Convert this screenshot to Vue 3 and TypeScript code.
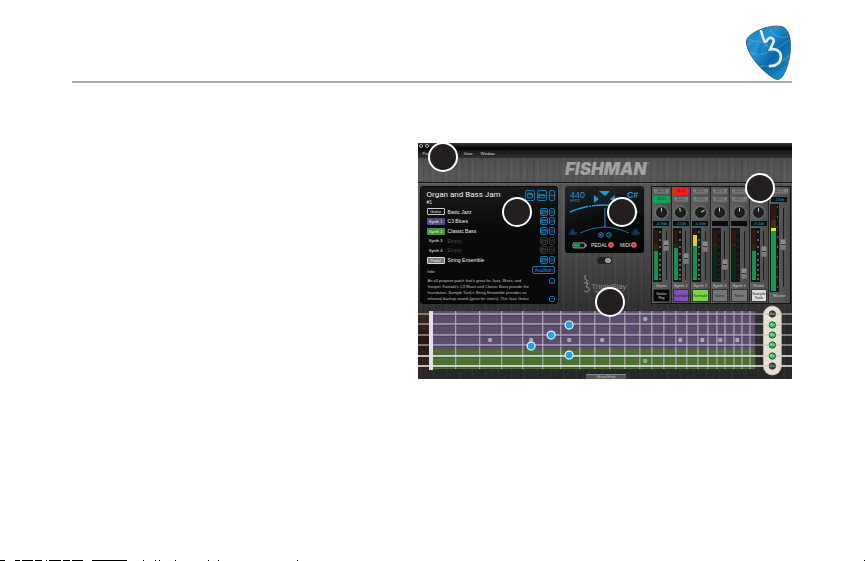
<script setup lang="ts">
import { ref } from 'vue'

interface Slot { label: string; name: string; kind: string }
interface Channel {
  name: string; device: string; tone: string; level: string
  mute: boolean; solo: boolean; green: number; yellow: number; dim: boolean; fader: number; knob: number
}

const slots: Slot[] = [
  { label: 'Guitar', name: 'Basic Jazz', kind: 'outline' },
  { label: 'Synth 1', name: 'C3 Blues', kind: 'purple' },
  { label: 'Synth 2', name: 'Classic Bass', kind: 'green' },
  { label: 'Synth 3', name: 'Empty', kind: 'empty' },
  { label: 'Synth 4', name: 'Empty', kind: 'empty' },
  { label: 'Pedal', name: 'String Ensemble', kind: 'silver' },
]

const channels = ref<Channel[]>([
  { name: 'Guitar', device: 'Guitar Rig', tone: 'black', level: '-4.9db', mute: false, solo: true, green: 29, yellow: 0, dim: false, fader: 73, knob: 0 },
  { name: 'Synth 1', device: 'Kontakt', tone: 'violet', level: '-12db', mute: true, solo: false, green: 32, yellow: 0, dim: false, fader: 43, knob: -10 },
  { name: 'Synth 2', device: 'Kontakt', tone: 'lime', level: '-0.4db', mute: false, solo: false, green: 34, yellow: 11, dim: false, fader: 69, knob: 60 },
  { name: 'Synth 3', device: 'None', tone: 'gray', level: '', mute: false, solo: false, green: 34, yellow: 0, dim: true, fader: 29, knob: 0 },
  { name: 'Synth 4', device: 'None', tone: 'gray', level: '', mute: false, solo: false, green: 34, yellow: 0, dim: true, fader: 8, knob: 0 },
  { name: 'Pedal', device: 'Sample Tank', tone: 'white', level: '-8.4db', mute: false, solo: false, green: 29, yellow: 0, dim: false, fader: 59, knob: 0 },
])
const master = ref(55)
const tunerOn = ref(true)

const frets = [37, 61, 83, 104, 124, 142, 161, 176, 191, 206, 221, 233, 245, 257, 268, 279, 289, 298, 306, 315, 323, 331]
const strings = [10, 20, 31, 41, 52, 62]
const inlays = [[72, 36], [113, 36], [151, 36], [184, 36], [227, 15], [227, 57], [262, 36], [284, 36], [302, 36], [319, 36]]
const notes = [[151, 21], [133, 31], [113, 42], [151, 51]]
const leds = [
  { y: 10, on: false }, { y: 21, on: true }, { y: 31, on: true },
  { y: 41, on: true }, { y: 52, on: true }, { y: 62, on: false },
]
const ticks = [4, 12, 19, 26, 32, 37, 42, 47, 51]
const callouts = ['on-menu', 'on-patch', 'on-tuner', 'on-mixer', 'on-board']
const marks = [[0, 5], [15, 5], [22, 11], [35, 7], [46, 1], [49, 12], [63, 7], [72, 11], [92, 35], [143, 1], [155, 1], [159, 1], [175, 1], [208, 1], [218, 1], [297, 1], [864, 1]]
</script>

<template>
  <div class="page">
    <header class="head">
      <svg class="pick" viewBox="45 30 140 168" aria-hidden="true">
        <defs>
          <linearGradient id="pickFill" x1="0" y1="0" x2="1" y2="1">
            <stop offset="0" stop-color="#187fc0" />
            <stop offset=".35" stop-color="#2493d2" />
            <stop offset=".6" stop-color="#0868ad" />
            <stop offset="1" stop-color="#24a0da" />
          </linearGradient>
          <clipPath id="pickClip"><path d="M49 77C51 66 66 54 89 44C114 33 146 31 158 36C174 43 181 63 181 95C181 134 165 180 151 190C145 195 137 194 126 187C94 165 61 128 52 98C49 89 48 83 49 77Z" /></clipPath>
        </defs>
        <path d="M49 77C51 66 66 54 89 44C114 33 146 31 158 36C174 43 181 63 181 95C181 134 165 180 151 190C145 195 137 194 126 187C94 165 61 128 52 98C49 89 48 83 49 77Z" fill="url(#pickFill)" stroke="#505f67" stroke-width="3" />
        <g clip-path="url(#pickClip)" fill="none" stroke-linecap="round">
          <path d="M52 91Q85 60 126 105M62 112Q112 132 176 75M91 154Q138 155 181 120M121 47Q144 76 175 63M52 75Q76 73 83 88" stroke="#70c4e9" stroke-width="4" opacity=".35" />
          <path d="M86 113Q93 75 121 78L115 116M115 116Q142 122 152 98M120 163Q145 170 163 145" stroke="#075b99" stroke-width="9" opacity=".32" />
        </g>
        <path d="M92 45C95 57 99 70 104 81C112 81 111 71 118 69C128 66 134 76 129 84L120 103C137 100 151 108 152 123C153 142 139 156 116 153" transform="translate(2 2)" fill="none" stroke="#365668" stroke-width="8" opacity=".65" />
        <path d="M92 45C95 57 99 70 104 81C112 81 111 71 118 69C128 66 134 76 129 84L120 103C137 100 151 108 152 123C153 142 139 156 116 153" fill="none" stroke="#e6e9eb" stroke-width="8" />
      </svg>
    </header>

    <main class="content">
      <section class="app">
        <div class="titlebar"><button aria-label="Close"></button><button aria-label="Minimize"></button></div>
        <nav class="menu"><a href="#">Patch</a><a href="#" class="view">View</a><a href="#">Window</a></nav>
        <div class="brand">FISHMAN<sup>®</sup></div>

        <div class="panels">
          <section class="patch">
            <div class="patch-head">
              <div>
                <h1>Organ and Bass Jam</h1>
                <p class="num">#1</p>
              </div>
              <div class="tools">
                <button class="tool big" aria-label="Save"><svg viewBox="0 0 10 10"><path d="M2 2h5l1 1v5H2zM4 2v2h3V2" /></svg></button>
                <button class="tool big" aria-label="Open"><svg viewBox="0 0 10 10"><path d="M1 8V3h2l1 1h4v1M1 8l1-3h7L8 8z" /></svg></button>
                <button class="tool tall" aria-label="Step"><svg viewBox="0 0 6 10"><path d="M0 5h6M2 3l1-1 1 1M2 7l1 1 1-1" /></svg></button>
              </div>
            </div>
            <ul class="slots">
              <li v-for="s in slots" :key="s.label" :class="s.kind">
                <span class="badge">{{ s.label }}</span>
                <span class="name">{{ s.name }}</span>
                <button class="tool small" :aria-label="'Open ' + s.label"><svg viewBox="0 0 8 7"><path d="M1 6V1h2l1 1h3v1M1 6l1-3h5L6 6z" /></svg></button>
                <button class="tool step" :aria-label="'Step ' + s.label"><svg viewBox="0 0 6 8"><path d="M0 4h6M2 2l1-1 1 1M2 6l1 1 1-1" /></svg></button>
              </li>
            </ul>
            <div class="info-head"><span>Info:</span><button class="audition">Audition</button></div>
            <div class="info">
              <p>An all-purpose patch that's great for Jazz, Blues, and<br>Gospel. Kontakt's C3 Blues and Classic Bass provide the<br>foundation. Sample Tank's String Ensemble provides an<br>ethereal backup sound (great for intro's). The Jazz Guitar</p>
              <div class="scroll">
                <button class="tool" aria-label="Scroll up"><svg viewBox="0 0 6 6"><path d="M2 4l1-1 1 1" /></svg></button>
                <button class="tool" aria-label="Scroll down"><svg viewBox="0 0 6 6"><path d="M2 2l1 1 1-1" /></svg></button>
              </div>
            </div>
          </section>

          <section class="center">
            <div class="tuner">
              <svg viewBox="0 0 79 67">
                <path d="M34 0H79V30Q55 20 30 20z" fill="#fff" opacity=".04" />
                <g fill="#159be0">
                  <text x="5" y="12" class="pitch">440</text>
                  <text x="5" y="16" class="micro">HERTZ</text>
                  <text x="62" y="12" class="lcd">C#</text>
                  <path d="M34 5h11l-5 5zM29 9l5 4-5 4zM50 9l-5 4 5 4z" />
                  <text x="5" y="46" class="micro">-20</text><text x="4" y="49" class="micro">CENT</text>
                  <text x="68" y="46" class="micro">+20</text><text x="67" y="49" class="micro">CENT</text>
                </g>
                <g fill="none" stroke="#159be0">
                  <path d="M5 26Q21 19 39 19T73 26" stroke-width="1.500" />
                  <path d="M40 22v20" />
                  <path d="M15 47Q40 35 64 47" stroke-width=".7" />
                  <circle cx="36" cy="49" r="2.300" stroke-width=".9" /><circle cx="44" cy="49" r="2.300" stroke-width=".9" />
                  <path d="M35 49h2M36 48v2M43 49h2" stroke-width=".8" />
                  <path d="M23 18l1 4M26 18l1 4M56 18l-1 4" stroke="#0b1116" />
                </g>
                <rect x="8" y="57" width="12" height="5" rx="1" fill="#10120f" stroke="#c7cdca" stroke-width=".8" />
                <path d="M21 58v3" stroke="#c7cdca" /><path d="M9 58h6v3H9z" fill="#1e9a50" />
                <g fill="#e0e0e0"><text x="26" y="61" class="status">PEDAL</text><text x="55" y="61" class="status">MIDI</text></g>
                <g fill="#f5202b" stroke="#e4c3c5" stroke-width=".7"><circle cx="46" cy="59" r="2.400" /><circle cx="69" cy="59" r="2.400" /></g>
              </svg>
            </div>
            <input v-model="tunerOn" class="switch" type="checkbox" aria-label="Tuner">
            <div class="triple">
              <svg viewBox="0 0 8 20" aria-hidden="true"><path d="M2 1v4q0 1 2 1v3M1 9h4L3 13q4 0 3 3t-5 1" /></svg>
              <span>TriplePlay<small>Wireless MIDI Guitar</small></span>
            </div>
          </section>

          <section class="mixer">
            <div v-for="c in channels" :key="c.name" class="strip">
              <button class="sw" :class="{ red: c.mute }">MUTE</button>
              <button class="sw" :class="{ grn: c.solo }">SOLO</button>
              <svg class="knob" viewBox="0 0 18 18">
                <circle cx="9" cy="9" r="7" fill="none" stroke="#999" stroke-width="1" stroke-dasharray="1 1.500" />
                <circle cx="9" cy="9" r="5" fill="#1d1e1f" stroke="#0b0b0b" />
                <path d="M9 8V4" stroke="#ddd" :transform="`rotate(${c.knob} 9 9)`" />
              </svg>
              <output class="db">{{ c.level }}</output>
              <div class="levels">
                <svg viewBox="0 0 9 54">
                  <path d="M0 0h9v54H0z" fill="#131414" />
                  <path d="M1 2h4v14H1z" fill="#391410" /><path d="M1 16h4v10H1z" fill="#2d2d12" />
                  <rect x="1" :y="52 - c.green" width="4" :height="c.green" :fill="c.dim ? '#092d19' : '#18a55b'" />
                  <rect v-if="c.yellow" x="1" :y="52 - c.green - c.yellow" width="4" :height="c.yellow" fill="#fff21b" />
                  <path v-for="t in 24" :key="t" :d="`M1 ${t * 2 + 2}h4`" stroke="#071d11" stroke-width=".3" />
                  <path v-for="t in ticks" :key="t" :d="`M6 ${t}h2`" stroke="#aaa" stroke-width="1" :opacity="c.dim ? .2 : 1" />
                </svg>
                <input v-model.number="c.fader" type="range" min="0" max="100" :aria-label="c.name + ' level'">
              </div>
              <span class="label">{{ c.name }}</span>
              <button class="device" :class="c.tone">{{ c.device }}</button>
            </div>
            <div class="strip master">
              <button class="sw">MUTE</button>
              <output class="db">-18db</output>
              <div class="levels">
                <svg viewBox="0 0 9 88">
                  <path d="M0 0h9v88H0z" fill="#131414" />
                  <path d="M1 2h5v14H1z" fill="#391410" /><path d="M1 16h5v8H1z" fill="#3b3611" />
                  <path d="M1 27h5v60H1z" fill="#18c56c" /><path d="M1 24h5v3H1z" fill="#f2df15" />
                  <path v-for="t in 30" :key="t" :d="`M1 ${t * 2 + 26}h5`" stroke="#07351d" stroke-width=".6" />
                  <path v-for="t in 9" :key="t" :d="`M7 ${t * 10 - 7}h1`" stroke="#aaa" />
                </svg>
                <input v-model.number="master" type="range" min="0" max="100" aria-label="Master level">
              </div>
              <span class="label">Master</span>
            </div>
          </section>
        </div>

        <svg class="board" viewBox="0 0 374 75" role="img" aria-label="Fretboard">
          <defs>
            <linearGradient id="wood" x1="0" y1="0" x2="0" y2="1"><stop offset="0" stop-color="#3b2823" /><stop offset=".5" stop-color="#251611" /><stop offset="1" stop-color="#35231e" /></linearGradient>
          </defs>
          <rect x="0" y="8" width="12" height="58" fill="url(#wood)" />
          <rect x="12" y="7" width="325" height="39" fill="#5d4e70" />
          <rect x="12" y="46" width="325" height="19" fill="#4c7335" />
          <path d="M15 14h322M15 26h322M15 36h322M15 49h322M15 58h322" stroke="#302838" stroke-width="1" opacity=".15" />
          <rect v-for="x in frets" :key="x" :x="x" y="7" width="1.200" height="58" fill="#adabb0" />
          <circle v-for="(m, i) in inlays" :key="i" :cx="m[0]" :cy="m[1]" r="2.200" :fill="m[1] > 50 ? '#8db56f' : '#aaa1b5'" />
          <g v-for="(y, i) in strings" :key="y">
            <path :d="`M0 ${y + 1}H374`" stroke="#222" stroke-width=".8" opacity=".6" />
            <path :d="`M0 ${y}H374`" :stroke="i > 3 ? '#f2f2f2' : '#cfced3'" :stroke-width="i > 3 ? 1.400 : 1" />
          </g>
          <rect x="11" y="7" width="4" height="59" fill="#e4e2e4" />
          <circle v-for="(n, i) in notes" :key="i" :cx="n[0]" :cy="n[1]" r="4" fill="#24a3df" stroke="#e9f4fa" stroke-width="1.200" />
          <rect x="345" y="2" width="18" height="69" rx="9" fill="#e8e0d2" stroke="#c9bfae" stroke-width=".6" />
          <g v-for="l in leds" :key="l.y">
            <path :d="`M345 ${l.y}h18`" stroke="#c8c3b9" />
            <circle cx="354" :cy="l.y" r="3.200" :fill="l.on ? '#1fbd54' : '#363938'" stroke="#173d26" stroke-width=".8" />
            <path :d="`M351 ${l.y}h6`" stroke="#c4dbc8" stroke-width=".7" />
            <circle cx="353" :cy="l.y - 1" r="1" :fill="l.on ? '#80efa2' : '#777'" />
          </g>
        </svg>
        <button class="drawer">Show/Hide</button>
        <i v-for="c in callouts" :key="c" class="callout" :class="c"></i>
      </section>
    </main>

    <svg class="edge" viewBox="0 0 865 1" preserveAspectRatio="none" aria-hidden="true">
      <rect v-for="m in marks" :key="m[0]" :x="m[0]" y="0" :width="m[1]" height="1" />
    </svg>
  </div>
</template>

<style>
body { margin: 0; background: #fff; }
</style>

<style scoped>
* { box-sizing: border-box; }
.page { min-height: 100vh; display: flex; flex-direction: column; font-family: "Liberation Sans", Arial, sans-serif; }
button { font: inherit; color: inherit; padding: 0; margin: 0; border: 0; background: none; display: block; }
.head { margin: 25px 73px 0 72px; border-bottom: 2px solid #a9abad; display: flex; justify-content: flex-end; }
.pick { width: 47px; height: 56px; display: block; }
.content { margin: 60px 73px 0 72px; display: grid; grid-template-columns: 12fr 13fr; }
.app {
  grid-column: 2; position: relative; color: #ddd; font-size: 4px; line-height: 6px; overflow: hidden;
  background:
    repeating-linear-gradient(90deg, #fff0 0 2px, #ffffff0a 2px 3px, #0000 3px 5px, #00000014 5px 6px, #0000 6px 11px, #00000012 11px 13px),
    linear-gradient(#444 0, #575757 30px, #555 60px, #484848 110px, #363636 155px, #2a2a2a 180px, #282828 100%);
}
.titlebar { height: 7px; display: flex; gap: 2px; padding: 1px; background: linear-gradient(#3a3a3a, #050505 70%); }
.titlebar button { width: 4px; height: 4px; border: 1px solid #aaa; border-radius: 50%; }
.menu { height: 8px; display: flex; gap: 8px; padding: 1px 5px; background: linear-gradient(#151515, #303030); }
.menu a { color: #ddd; text-decoration: none; }
.menu .view { margin-left: 23px; }
.brand { height: 25px; padding-left: 5px; border-bottom: 1px solid #151515; text-align: center; font: italic 900 17px/23px Inter, sans-serif; color: #a0a2a4; }
.brand sup { font: 4px/4px "Liberation Sans", sans-serif; vertical-align: top; position: relative; top: 4px; }
.panels { border-top: 1px solid #666; padding: 2px 1px 0 2px; display: grid; grid-template-columns: 139fr 79fr 140fr; gap: 7px; }
.patch { background: linear-gradient(#1a1a1a, #0a0a0a 35%, #080808); border: 1px solid #070707; border-radius: 3px; padding: 3px 2px 2px 6px; height: 118px; }
.patch-head { display: flex; justify-content: space-between; height: 17px; }
h1 { margin: 0; font: 400 8px/9px Roboto, sans-serif; color: #f2f2f2; white-space: nowrap; }
.num { margin: 0; font-size: 5px; line-height: 6px; color: #eee; }
.tools { display: flex; gap: 2px; }
.tool { border: 1px solid #1278b2; border-radius: 2px; color: #1a9be0; }
.tool svg { display: block; width: 100%; height: 100%; fill: none; stroke: currentColor; stroke-width: 1; }
.big { width: 10px; height: 11px; }
.tall { width: 6px; height: 11px; }
.slots { list-style: none; margin: 0; padding: 0; height: 58px; display: grid; grid-template-rows: repeat(6, 1fr); }
.slots li { display: flex; align-items: center; gap: 1px; }
.badge { width: 18px; height: 7px; line-height: 7px; text-align: center; border-radius: 1px; color: #eee; }
.name { flex: 1; margin-left: 2px; font-size: 5px; color: #f2f2f2; }
.outline .badge { border: 1px solid #ccc; line-height: 5px; }
.purple .badge { background: #57488a; }
.green .badge { background: #459530; }
.silver .badge { background: #777; border: 1px solid #ddd; line-height: 5px; }
.empty .name { color: #4a4a4a; }
.empty .tool { border-color: #333; color: #444; }
.small { width: 8px; height: 8px; }
.step { width: 6px; height: 8px; }
.info-head { display: flex; justify-content: space-between; align-items: flex-start; height: 13px; }
.info-head span { padding: 4px 0 0 1px; }
.audition { margin-top: 1px; width: 23px; height: 8px; border: 1px solid #147bb5; border-radius: 2px; color: #1a9be0; font-size: 5px; line-height: 6px; }
.info { display: flex; justify-content: space-between; }
.info p { margin: 0 0 0 1px; color: #c0c0c0; white-space: nowrap; }
.scroll { display: flex; flex-direction: column; justify-content: space-between; }
.scroll .tool { width: 6px; height: 6px; }
.center { display: flex; flex-direction: column; align-items: center; }
.tuner { align-self: stretch; background: linear-gradient(155deg, #24272a, #0a0b0c 45%, #050505); border-radius: 3px; }
.tuner svg { display: block; width: 100%; }
.lcd { font: bold 9px "Liberation Sans", sans-serif; }
.pitch { font: 9px "Liberation Sans", sans-serif; }
.micro { font: 3px "Liberation Sans", sans-serif; }
.status { font: 5px "Liberation Sans", sans-serif; }
.switch { appearance: none; width: 15px; height: 7px; margin: 4px 0 0; border-radius: 4px; background: radial-gradient(circle at 11px 50%, #999 0 3px, #222 3px); }
.triple { display: flex; color: #8c8c8c; font-size: 8px; line-height: 9px; margin-top: 10px; }
.triple svg { width: 8px; height: 20px; fill: none; stroke: #929292; }
.triple span { padding-top: 8px; }
.triple small { display: block; font-size: 3px; line-height: 3px; text-align: center; }
.mixer { display: grid; grid-template-columns: repeat(6, 1fr) 21px; border: 1px solid #111; background: #555; height: 118px; }
.strip { border-right: 1px solid #242424; padding: 1px 1px 0; display: flex; flex-direction: column; align-items: center; background: linear-gradient(90deg, #606060, #4c4c4c); min-width: 0; }
.sw { width: 100%; height: 7px; margin-bottom: 1px; background: linear-gradient(#858585, #6a6a6a); color: #333; font-size: 3px; line-height: 5px; border: 1px solid #555; border-radius: 1px; text-align: center; }
.sw.red { background: #f51e1e; border-color: #f51e1e; color: #6b0808; }
.sw.grn { background: #0da452; border-color: #0da452; color: #064525; }
.knob { width: 17px; height: 17px; display: block; }
.db { width: 16px; height: 5px; margin: 0 0 2px; background: #090d10; color: #159bdc; font-size: 4px; line-height: 5px; text-align: center; white-space: nowrap; }
.levels { display: flex; width: 100%; height: 54px; gap: 1px; }
.levels svg { width: 9px; height: 100%; flex: none; }
.levels input {
  appearance: none; writing-mode: vertical-lr; direction: rtl; width: 7px; min-width: 0; height: 100%; margin: 0;
  background: linear-gradient(#1c1c1c, #1c1c1c) center / 1px 90% no-repeat;
}
.levels input::-webkit-slider-thumb { appearance: none; box-sizing: border-box; width: 6px; height: 11px; border: 1px solid #6d6d6d; border-radius: 1px; background: linear-gradient(#8a8a8a 45%, #333 45% 55%, #7a7a7a 55%); }
.label { color: #ccc; line-height: 7px; white-space: nowrap; }
.device { width: 100%; height: 13px; font-size: 4px; line-height: 4px; border: 1px solid #333; }
.black { background: #050505; color: #ddd; }
.violet { background: #8350b5; color: #251138; }
.lime { background: #78d747; color: #153808; }
.gray { background: #777; color: #222; }
.white { background: #ddd; color: #222; }
.master { border-right: 0; }
.master .levels { height: 88px; }
.master .db { margin-top: 1px; }
.board { display: block; width: 100%; }
.drawer { position: absolute; bottom: 0; left: 45%; width: 40px; height: 5px; background: #555; color: #bbb; font-size: 4px; line-height: 4px; border-top: 1px solid #888; }
.callout { position: absolute; width: 30px; height: 30px; border: 2px solid #fff; border-radius: 50%; background: #231f20; transform: translate(-50%, -50%); }
.on-menu { left: 25px; top: 14px; }
.on-patch { left: 99px; top: 69px; }
.on-tuner { left: 204px; top: 69px; }
.on-mixer { left: 342px; top: 45px; }
.on-board { left: 192px; top: 159px; }
.edge { width: 100%; height: 1px; margin-top: auto; display: block; }
</style>
